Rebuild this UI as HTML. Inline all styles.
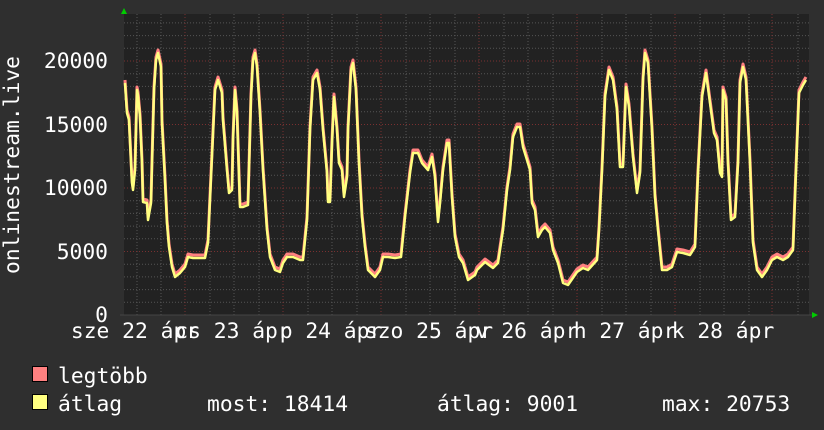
<!DOCTYPE html>
<html><head><meta charset="utf-8"><style>
html,body{margin:0;padding:0;background:#2f2f2f;}
svg{display:block}
text{font-family:"DejaVu Sans Mono","Liberation Mono",monospace;fill:#fff;font-size:21.3px}
</style></head><body>
<svg width="824" height="430" viewBox="0 0 824 430" xmlns="http://www.w3.org/2000/svg">
<rect width="824" height="430" fill="#2f2f2f"/>
<rect x="124" y="14" width="685" height="301" fill="#222"/>
<g stroke="#555" stroke-width="1" stroke-dasharray="1,2">
<path d="M124 302.3H809M124 289.6H809M124 276.9H809M124 264.2H809M124 238.8H809M124 226.1H809M124 213.4H809M124 200.7H809M124 175.3H809M124 162.6H809M124 149.9H809M124 137.2H809M124 111.8H809M124 99.1H809M124 86.4H809M124 73.7H809M124 48.3H809M124 35.6H809M124 22.9H809"/>
<path d="M137 14V315M161 14V315M210 14V315M234 14V315M259 14V315M308 14V315M332 14V315M357 14V315M406 14V315M430 14V315M455 14V315M504 14V315M528 14V315M553 14V315M602 14V315M626 14V315M651 14V315M700 14V315M724 14V315M749 14V315M798 14V315"/>
</g>
<g stroke="#7a3030" stroke-width="1" stroke-dasharray="1,2">
<path d="M124 251.5H809M124 188H809M124 124.5H809M124 61H809"/>
<path d="M185 14V315M283 14V315M381 14V315M479 14V315M577 14V315M675 14V315M772 14V315"/>
</g>
<line x1="120" y1="315" x2="812" y2="315" stroke="#444"/>
<polygon points="121,14 127,14 124,8" fill="#0c0"/>
<polygon points="812,312 812,318 818,315" fill="#0c0"/>
<g fill="none" stroke-linejoin="round">
<path transform="translate(0,-3)" stroke="#ff8080" stroke-width="3" d="M125 83L127 113L129 120L132 183L133 190L135 170L137 90L138 95L140 117L142 163L143 202L147 203L148 220L151 203L152 163L154 90L156 60L158 53L161 67L162 123L165 180L167 223L169 247L172 267L175 277L180 273L185 267L188 257L193 258L205 258L208 243L211 177L215 90L218 80L222 93L223 120L227 170L229 193L232 190L233 140L235 90L237 113L240 207L243 207L248 205L251 97L253 60L255 53L257 67L260 113L263 170L267 230L270 257L275 270L280 272L283 263L287 257L293 257L300 260L303 260L307 220L310 130L313 80L317 73L320 90L323 130L327 173L328 202L330 202L332 143L334 97L337 130L339 163L342 170L344 197L347 177L348 130L351 70L353 63L356 90L359 163L362 217L365 247L368 270L375 277L380 270L383 257L388 257L395 258L401 257L405 217L410 173L413 153L418 153L422 163L428 170L432 157L435 177L438 222L440 203L443 170L447 143L449 143L452 197L455 237L459 257L463 263L468 280L475 275L477 270L485 262L493 268L498 263L503 230L507 190L510 170L513 137L517 127L520 127L523 147L527 160L530 170L532 203L535 210L538 237L542 230L545 227L550 233L553 250L558 263L563 283L568 285L577 272L583 268L588 270L597 260L599 230L602 170L605 97L609 70L613 80L617 110L620 167L623 167L626 87L629 107L633 157L637 193L640 173L643 80L645 53L648 63L652 130L655 197L658 230L662 270L667 270L672 267L677 252L683 253L690 255L695 247L698 173L702 97L706 73L710 103L714 133L717 140L720 173L722 177L723 90L726 100L728 163L731 220L735 217L738 163L740 83L743 67L746 80L750 163L753 243L757 270L762 277L767 270L772 260L777 257L783 260L788 257L793 250L796 170L799 93L803 85L806 80"/>
<path stroke="#ffff80" stroke-width="2.5" d="M125 83L127 113L129 120L132 183L133 190L135 170L137 90L138 95L140 117L142 163L143 202L147 203L148 220L151 203L152 163L154 90L156 60L158 53L161 67L162 123L165 180L167 223L169 247L172 267L175 277L180 273L185 267L188 257L193 258L205 258L208 243L211 177L215 90L218 80L222 93L223 120L227 170L229 193L232 190L233 140L235 90L237 113L240 207L243 207L248 205L251 97L253 60L255 53L257 67L260 113L263 170L267 230L270 257L275 270L280 272L283 263L287 257L293 257L300 260L303 260L307 220L310 130L313 80L317 73L320 90L323 130L327 173L328 202L330 202L332 143L334 97L337 130L339 163L342 170L344 197L347 177L348 130L351 70L353 63L356 90L359 163L362 217L365 247L368 270L375 277L380 270L383 257L388 257L395 258L401 257L405 217L410 173L413 153L418 153L422 163L428 170L432 157L435 177L438 222L440 203L443 170L447 143L449 143L452 197L455 237L459 257L463 263L468 280L475 275L477 270L485 262L493 268L498 263L503 230L507 190L510 170L513 137L517 127L520 127L523 147L527 160L530 170L532 203L535 210L538 237L542 230L545 227L550 233L553 250L558 263L563 283L568 285L577 272L583 268L588 270L597 260L599 230L602 170L605 97L609 70L613 80L617 110L620 167L623 167L626 87L629 107L633 157L637 193L640 173L643 80L645 53L648 63L652 130L655 197L658 230L662 270L667 270L672 267L677 252L683 253L690 255L695 247L698 173L702 97L706 73L710 103L714 133L717 140L720 173L722 177L723 90L726 100L728 163L731 220L735 217L738 163L740 83L743 67L746 80L750 163L753 243L757 270L762 277L767 270L772 260L777 257L783 260L788 257L793 250L796 170L799 93L803 85L806 80"/>
</g>
<g text-anchor="end">
<text x="108" y="68">20000</text>
<text x="108" y="132">15000</text>
<text x="108" y="195">10000</text>
<text x="108" y="259">5000</text>
<text x="108" y="322">0</text>
</g>
<text transform="translate(19,165) rotate(-90)" text-anchor="middle">onlinestream.live</text>
<g text-anchor="middle">
<text x="135" y="338">sze 22 ápr</text>
<text x="233" y="338">cs 23 ápr</text>
<text x="331" y="338">p 24 ápr</text>
<text x="429" y="338">szo 25 ápr</text>
<text x="527" y="338">v 26 ápr</text>
<text x="625" y="338">h 27 ápr</text>
<text x="723" y="338">k 28 ápr</text>
</g>
<rect x="32.5" y="366.5" width="15" height="15" fill="#ff8080" stroke="#000"/>
<rect x="32.5" y="394.5" width="15" height="15" fill="#ffff80" stroke="#000"/>
<text x="58" y="383">legtöbb</text>
<text x="58" y="411">átlag</text>
<text x="207" y="411">most: 18414</text>
<text x="437" y="411">átlag: 9001</text>
<text x="662" y="411">max: 20753</text>
</svg>
</body></html>
